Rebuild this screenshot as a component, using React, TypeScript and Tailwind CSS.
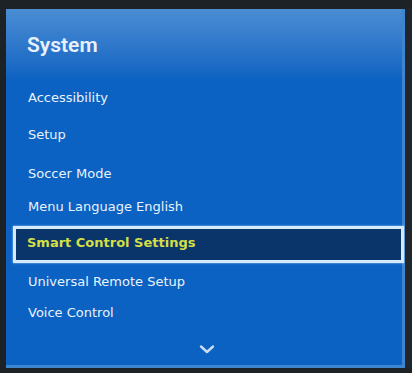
import React from "react";

const item = "block h-[20px] leading-[20px] text-[13px] text-[#eaf2fb] pl-[22px]";

export default function App() {
  return (
    <div className="w-[412px] h-[373px] bg-[#1d2227] flex flex-col overflow-hidden" style={{ fontFamily: '"DejaVu Sans", sans-serif' }}>
      <div className="h-[9px] shrink-0" />
      <div className="flex flex-row h-[359px] pl-[6px]">
        <div className="w-[399px] h-full flex flex-col bg-[#0b62c2] bg-gradient-to-b from-[#4a8dd3] to-[#0b62c2] to-[20%] border-r-[3px] border-b-[3px] border-[#3d86cf]">
          <div className="mt-[22px] h-[28px] leading-[28px] text-[21px] font-semibold text-[#e8f1fb] pl-[21px]" style={{ fontFamily: 'Roboto, "Liberation Sans", sans-serif' }}>
            System
          </div>
          <div className={"mt-[29px] " + item}>Accessibility</div>
          <div className={"mt-[17px] " + item}>Setup</div>
          <div className={"mt-[19px] " + item}>Soccer Mode</div>
          <div className={"mt-[13px] " + item}>Menu Language English</div>
          <div className="mt-[9px] ml-[7px] mr-[-2px] border-[3px] border-[#d7eafb] bg-[#0a356b] pt-[4px] pb-[7px] pl-[11px] shadow-[0_0_2px_#9ccaf5]">
            <div className="h-[20px] leading-[20px] text-[13px] font-bold text-[#d3df45]">Smart Control Settings</div>
          </div>
          <div className={"mt-[9px] " + item}>Universal Remote Setup</div>
          <div className={"mt-[11px] " + item}>Voice Control</div>
          <div className="mt-[22px] flex justify-center pl-[6px]">
            <svg width="16" height="9" viewBox="0 0 16 9" fill="none">
              <path d="M2 1.5 L8 7 L14 1.5" stroke="#c9ddf5" strokeWidth="2.4" strokeLinecap="round" strokeLinejoin="round" />
            </svg>
          </div>
        </div>
        <div className="w-[7px] h-full bg-[#1f262d]" />
      </div>
    </div>
  );
}
